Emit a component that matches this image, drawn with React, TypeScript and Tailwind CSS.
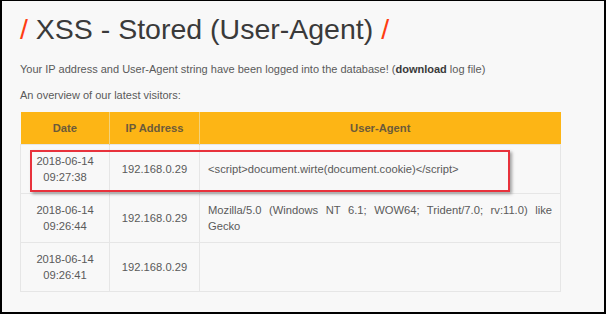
import React from "react";

const rows = [
  { d: "2018-06-14", t: "09:27:38", ip: "192.168.0.29", ua: "<script>document.wirte(document.cookie)</script>" },
  { d: "2018-06-14", t: "09:26:44", ip: "192.168.0.29", ua: "Mozilla/5.0 (Windows NT 6.1; WOW64; Trident/7.0; rv:11.0) like Gecko" },
  { d: "2018-06-14", t: "09:26:41", ip: "192.168.0.29", ua: "" },
];

export default function App() {
  return (
    <div className="w-[606px] h-[314px] bg-black pl-[2px] pt-[1px] pr-[2px] pb-[2px]" style={{ fontFamily: '"Liberation Sans", Arial, sans-serif' }}>
      <div className="relative w-full h-full bg-[#f8f8f8] pl-[18px] pr-[43px]">
        <h1 className="pt-[11px] text-[28.5px] leading-[34px] text-[#3a3a3a] whitespace-nowrap">
          <span className="text-[#ff3d12]">/</span> XSS - Stored (User-Agent) <span className="text-[#ff3d12]">/</span>
        </h1>
        <p className="mt-[16px] text-[11px] leading-[14px] text-[#5a5a5a]">
          Your IP address and User-Agent string have been logged into the database! (<b className="text-[#3a3a3a]">download</b> log file)
        </p>
        <p className="mt-[12px] text-[11px] leading-[14px] text-[#5a5a5a]">An overview of our latest visitors:</p>
        <table className="mt-[10px] w-[541px] border-collapse text-[11.2px] leading-[16px] text-[#5a5a5a]">
          <thead>
            <tr className="bg-[#fdb515] h-[32px]">
              <th className="w-[89px] border-r border-[#f3d27a] font-bold text-[#6b5a3a]">Date</th>
              <th className="w-[90px] border-r border-[#f3d27a] font-bold text-[#6b5a3a]">IP Address</th>
              <th className="font-bold text-[#6b5a3a]">User-Agent</th>
            </tr>
          </thead>
          <tbody>
            {rows.map((r, i) => (
              <tr key={i} className="h-[49px]">
                <td className="border border-[#e6e6e6] text-center px-2 py-2">
                  {r.d}
                  <br />
                  {r.t}
                </td>
                <td className="border border-[#e6e6e6] text-center px-2">{r.ip}</td>
                <td className="border border-[#e6e6e6] px-[8px] text-justify">{r.ua}</td>
              </tr>
            ))}
          </tbody>
        </table>
        <div className="absolute left-[28px] top-[149px] w-[480px] h-[42px] border-2 border-[#e8323c] shadow-[2px_2px_3px_rgba(0,0,0,0.35)]" />
      </div>
    </div>
  );
}
